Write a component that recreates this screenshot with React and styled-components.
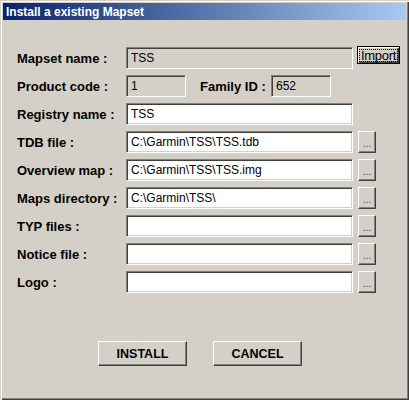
import React from 'react'
import styled, { createGlobalStyle } from 'styled-components'

const Global = createGlobalStyle`
  html, body {
    margin: 0;
    padding: 0;
    background: #d4d0c8;
  }
  * {
    box-sizing: border-box;
  }
`

const Window = styled.div`
  width: 409px;
  height: 400px;
  padding: 3px;
  background-color: #d4d0c8;
  box-shadow: inset 1px 1px #d4d0c8, inset 2px 2px #ffffff,
    inset -1px -1px #404040, inset -2px -2px #808080;
  display: flex;
  flex-direction: column;
  font-family: "Liberation Sans", Arial, sans-serif;
  color: #000;
`

const TitleBar = styled.div`
  height: 17px;
  padding-left: 3px;
  display: flex;
  align-items: center;
  background: linear-gradient(to right, #0a246a, #a6caf0);
  color: #fff;
  font-size: 12px;
  font-weight: bold;
`

const Body = styled.div`
  padding: 27px 0 0 14px;
  display: flex;
  flex-direction: column;
`

const Form = styled.div`
  display: flex;
  flex-direction: column;
  gap: 6px;
`

const Row = styled.div`
  height: 22px;
  display: flex;
  align-items: center;
`

const Label = styled.div`
  width: ${p => p.$width || 109}px;
  margin-left: ${p => p.$offset || 0}px;
  font-size: 13px;
  font-weight: bold;
  white-space: nowrap;
`

const Field = styled.div`
  width: ${p => p.$width || 227}px;
  height: 22px;
  padding: 0 0 0 4px;
  display: flex;
  align-items: center;
  font-size: 12px;
  white-space: nowrap;
  overflow: hidden;
  background-color: ${p => (p.$readOnly ? '#d4d0c8' : '#ffffff')};
  border: 1px solid;
  border-color: #808080 #ffffff #ffffff #808080;
  box-shadow: inset 1px 1px #404040, inset -1px -1px #d4d0c8;
`

const Browse = styled.button`
  width: 18px;
  height: 22px;
  margin-left: 5px;
  padding: 0 0 3px;
  display: flex;
  align-items: flex-end;
  justify-content: center;
  background-color: #d4d0c8;
  border: 1px solid;
  border-color: #ffffff #404040 #404040 #ffffff;
  box-shadow: inset -1px -1px #808080;
  font-family: "Liberation Sans", Arial, sans-serif;
  font-size: 10px;
  line-height: 10px;
  color: #404040;
`

const ImportButton = styled.button`
  width: 43px;
  height: 18px;
  margin-left: 4px;
  align-self: flex-start;
  margin-top: -1px;
  padding: 0;
  display: flex;
  align-items: center;
  justify-content: center;
  background-color: #d4d0c8;
  border: 1px solid #000;
  box-shadow: inset 1px 1px #ffffff, inset -1px -1px #404040,
    inset -2px -2px #808080;
  font-family: "Liberation Sans", Arial, sans-serif;
  font-size: 13px;
  color: #000;
`

const FocusText = styled.span`
  border: 1px dotted #000;
  line-height: 11px;
  padding: 0 1px;
  letter-spacing: -0.3px;
`

const Actions = styled.div`
  margin: 48px 0 0 81px;
  display: flex;
  gap: 26px;
`

const ActionButton = styled.button`
  width: 89px;
  height: 25px;
  padding: 0;
  background-color: #d4d0c8;
  border: 1px solid;
  border-color: #ffffff #404040 #404040 #ffffff;
  box-shadow: inset -1px -1px #808080;
  font-family: "Liberation Sans", Arial, sans-serif;
  font-size: 12.5px;
  font-weight: bold;
  color: #000;
`

const paths = [
  { label: 'TDB file :', value: 'C:\\Garmin\\TSS\\TSS.tdb' },
  { label: 'Overview map :', value: 'C:\\Garmin\\TSS\\TSS.img' },
  { label: 'Maps directory :', value: 'C:\\Garmin\\TSS\\' },
  { label: 'TYP files :', value: '' },
  { label: 'Notice file :', value: '' },
  { label: 'Logo :', value: '' },
]

const App = () => {
  return (
    <Window>
      <Global />
      <TitleBar>Install a existing Mapset</TitleBar>
      <Body>
        <Form>
          <Row>
            <Label>Mapset name :</Label>
            <Field $readOnly>TSS</Field>
            <ImportButton>
              <FocusText>Import</FocusText>
            </ImportButton>
          </Row>
          <Row>
            <Label>Product code :</Label>
            <Field $readOnly $width={60}>1</Field>
            <Label $offset={14} $width={71}>Family ID :</Label>
            <Field $readOnly $width={60}>652</Field>
          </Row>
          <Row>
            <Label>Registry name :</Label>
            <Field>TSS</Field>
          </Row>
          {paths.map(p => (
            <Row key={p.label}>
              <Label>{p.label}</Label>
              <Field>{p.value}</Field>
              <Browse>...</Browse>
            </Row>
          ))}
        </Form>
        <Actions>
          <ActionButton>INSTALL</ActionButton>
          <ActionButton>CANCEL</ActionButton>
        </Actions>
      </Body>
    </Window>
  )
}

export default App
